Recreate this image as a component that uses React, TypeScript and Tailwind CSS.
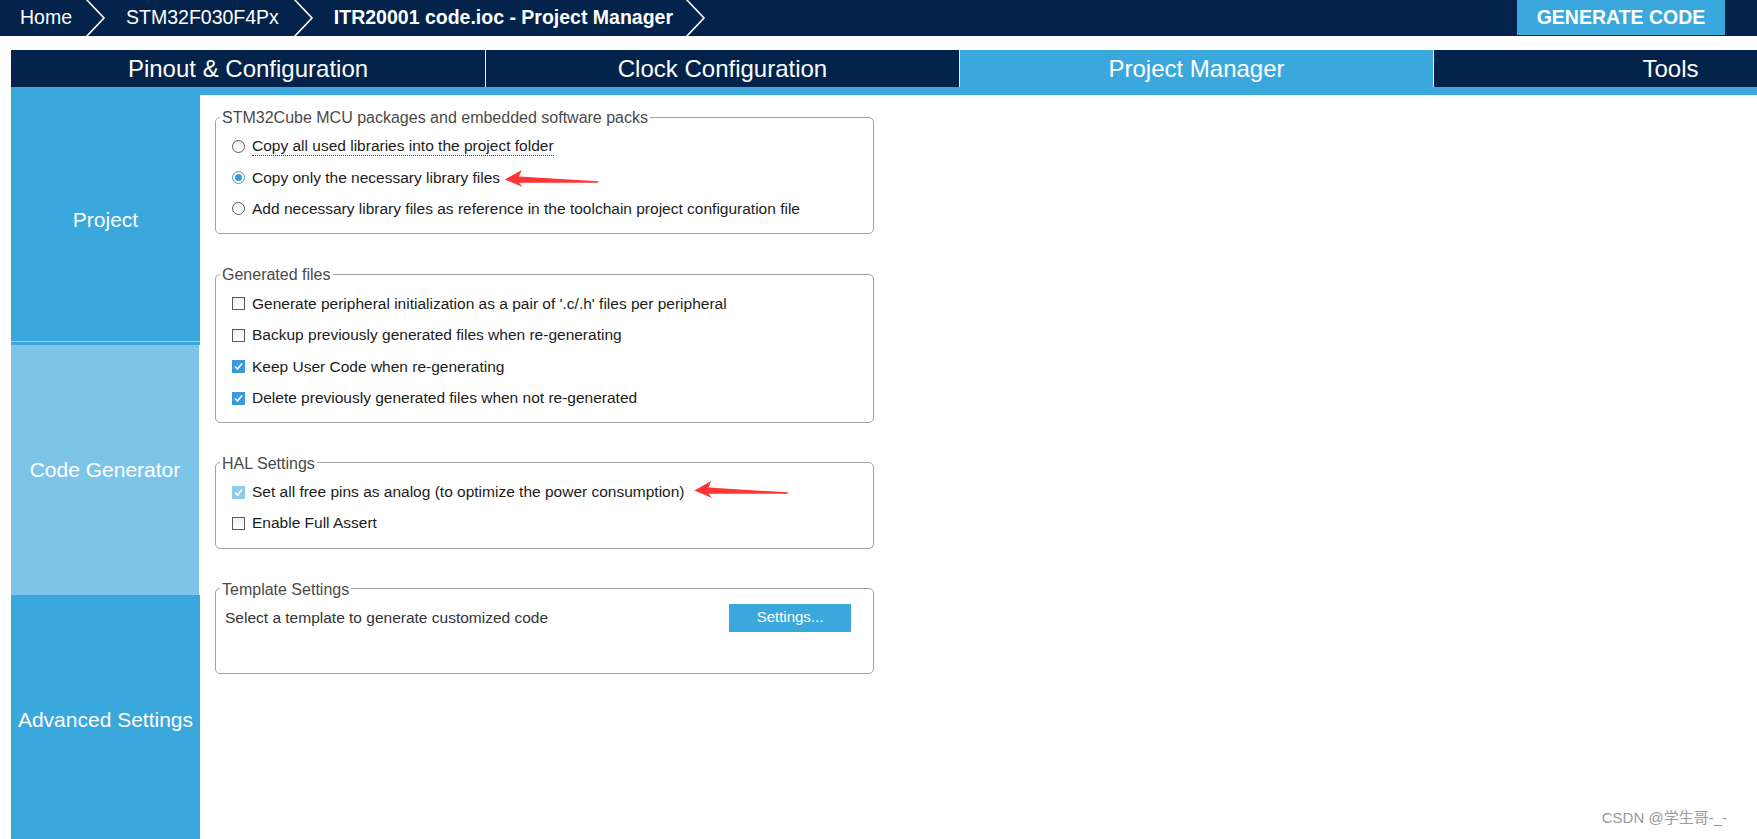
import React from 'react';

const TABS = ['Pinout & Configuration', 'Clock Configuration', 'Project Manager', 'Tools'];

const Chevron = () => (
  <svg width="22" height="36" viewBox="0 0 22 36" className="shrink-0">
    <polyline points="2,-1 20,18 2,37" fill="none" stroke="white" strokeWidth="1.6" />
  </svg>
);

const Radio = ({ checked }: { checked?: boolean }) =>
  checked ? (
    <span className="flex h-[13px] w-[13px] shrink-0 items-center justify-center rounded-full border border-[#3b9ad9] bg-white">
      <span className="h-[7px] w-[7px] rounded-full bg-[#3b9ad9]" />
    </span>
  ) : (
    <span className="h-[13px] w-[13px] shrink-0 rounded-full border border-[#5a5a5a] bg-gradient-to-b from-[#f2f2f2] to-white" />
  );

const Check = ({ checked, dim }: { checked?: boolean; dim?: boolean }) => {
  if (!checked) {
    return <span className="h-[13px] w-[13px] shrink-0 border border-[#5a5a5a] bg-gradient-to-b from-[#f0f0f0] to-white" />;
  }
  return (
    <span className={`flex h-[13px] w-[13px] shrink-0 items-center justify-center ${dim ? 'bg-[#8ccbeb]' : 'bg-[#3b9ad9]'}`}>
      <svg width="11" height="11" viewBox="0 0 11 11">
        <polyline points="2,5.5 4.5,8 9,2.5" fill="none" stroke="white" strokeWidth="1.6" />
      </svg>
    </span>
  );
};

const Arrow = ({ className }: { className: string }) => (
  <svg viewBox="0 0 100 18" className={`absolute ${className}`}>
    <polygon points="0,10 18,0 15,7 99,12 99,13.4 15,13.6 19,18" fill="#ff3434" />
  </svg>
);

// fieldset box with legend sitting on the top border
const Group = ({ title, children, bottom = 'pb-[9px]' }: { title: string; children: React.ReactNode; bottom?: string }) => (
  <fieldset className={`w-[659px] rounded-[5px] border border-[#a3a3a3] px-[4px] ${bottom}`}>
    <legend className="px-[2px] pt-[2px] text-[16px] leading-[18px] text-[#4a4a4a]">{title}</legend>
    <div className="pt-[4px]">{children}</div>
  </fieldset>
);

const Row = ({ control, label, dotted }: { control: React.ReactNode; label: string; dotted?: boolean }) => (
  <div className="flex h-[31px] items-center gap-[7px] pl-[12px] text-[15.5px] text-[#1c1c1c]">
    {control}
    <span className={dotted ? 'border-b border-dotted border-[#333] leading-[18px]' : 'leading-[18px]'}>{label}</span>
  </div>
);

export default function App() {
  return (
    <div className="relative flex h-[839px] w-[1757px] flex-col overflow-hidden bg-white font-['Liberation_Sans',Arial,sans-serif]">
      {/* breadcrumb bar */}
      <div className="flex h-[36px] shrink-0 items-center bg-[#03234b] text-white">
        <span className="pl-[20px] text-[19.5px]">Home</span>
        <span className="ml-[12px] mr-[20px] flex"><Chevron /></span>
        <span className="text-[19.5px]">STM32F030F4Px</span>
        <span className="ml-[13px] mr-[20px] flex"><Chevron /></span>
        <span className="text-[19.5px] font-bold">ITR20001 code.ioc - Project Manager</span>
        <span className="ml-[11px] flex"><Chevron /></span>
        <button className="ml-auto mr-[32px] h-[35px] w-[208px] self-start bg-[#3aa8dc] text-[19.5px] font-bold text-white">
          GENERATE CODE
        </button>
      </div>

      <div className="h-[14px] shrink-0" />

      <div className="ml-[11px] flex min-h-0 flex-1 flex-col">
        {/* tabs */}
        <div className="flex h-[37px] w-[1896px] shrink-0 bg-[#03234b]">
          {TABS.map((t, i) => (
            <div
              key={t}
              className={`flex w-[474px] shrink-0 items-center justify-center text-[24px] text-white ${i > 0 ? 'border-l border-[#e8edf3]' : ''} ${i === 2 ? 'bg-[#3aa8dc]' : ''}`}
            >
              {t}
            </div>
          ))}
        </div>
        <div className="h-[8px] shrink-0 bg-[#3aa8dc]" />

        <div className="flex min-h-0 flex-1">
          {/* side menu */}
          <div className="flex w-[189px] shrink-0 flex-col text-[21px] text-white">
            <div className="flex h-[246px] items-center justify-center bg-[#3aa8dc] pt-[4px]">Project</div>
            <div className="h-[1px] bg-[#93d0ee]" />
            <div className="h-[3px] bg-[#3aa8dc]" />
            <div className="flex h-[250px] w-[188px] items-center justify-center bg-[#7dc5e8]">Code Generator</div>
            <div className="flex flex-1 items-center justify-center bg-[#3aa8dc] pt-[6px]">Advanced Settings</div>
          </div>

          {/* settings */}
          <div className="flex flex-col gap-[30px] pl-[15px] pt-[12px]">
            <Group title="STM32Cube MCU packages and embedded software packs">
              <Row control={<Radio />} label="Copy all used libraries into the project folder" dotted />
              <Row control={<Radio checked />} label="Copy only the necessary library files" />
              <Row control={<Radio />} label="Add necessary library files as reference in the toolchain project configuration file" />
            </Group>

            <Group title="Generated files" bottom="pb-[8px]">
              <div className="flex flex-col gap-[0.5px]">
                <Row control={<Check />} label="Generate peripheral initialization as a pair of '.c/.h' files per peripheral" />
                <Row control={<Check />} label="Backup previously generated files when re-generating" />
                <Row control={<Check checked />} label="Keep User Code when re-generating" />
                <Row control={<Check checked />} label="Delete previously generated files when not re-generated" />
              </div>
            </Group>

            <Group title="HAL Settings">
              <Row control={<Check checked dim />} label="Set all free pins as analog (to optimize the power consumption)" />
              <Row control={<Check />} label="Enable Full Assert" />
            </Group>

            <Group title="Template Settings" bottom="pb-[40px]">
              <div className="flex h-[30px] items-center justify-between pl-[5px] pr-[18px] text-[15.5px] text-[#333]">
                <span>Select a template to generate customized code</span>
                <button className="h-[28px] w-[122px] bg-[#3aa8dc] text-[15px] text-white">Settings...</button>
              </div>
            </Group>
          </div>
        </div>
      </div>

      <Arrow className="left-[503px] top-[170px] h-[17px] w-[98px]" />
      <Arrow className="left-[691px] top-[481px] h-[17px] w-[101px]" />

      <div className="absolute bottom-[10px] right-[30px] font-['Liberation_Sans','Noto_Sans_CJK_SC',sans-serif] text-[15px] text-[#9a9a9a]">
        CSDN @学生哥-_-
      </div>
    </div>
  );
}
